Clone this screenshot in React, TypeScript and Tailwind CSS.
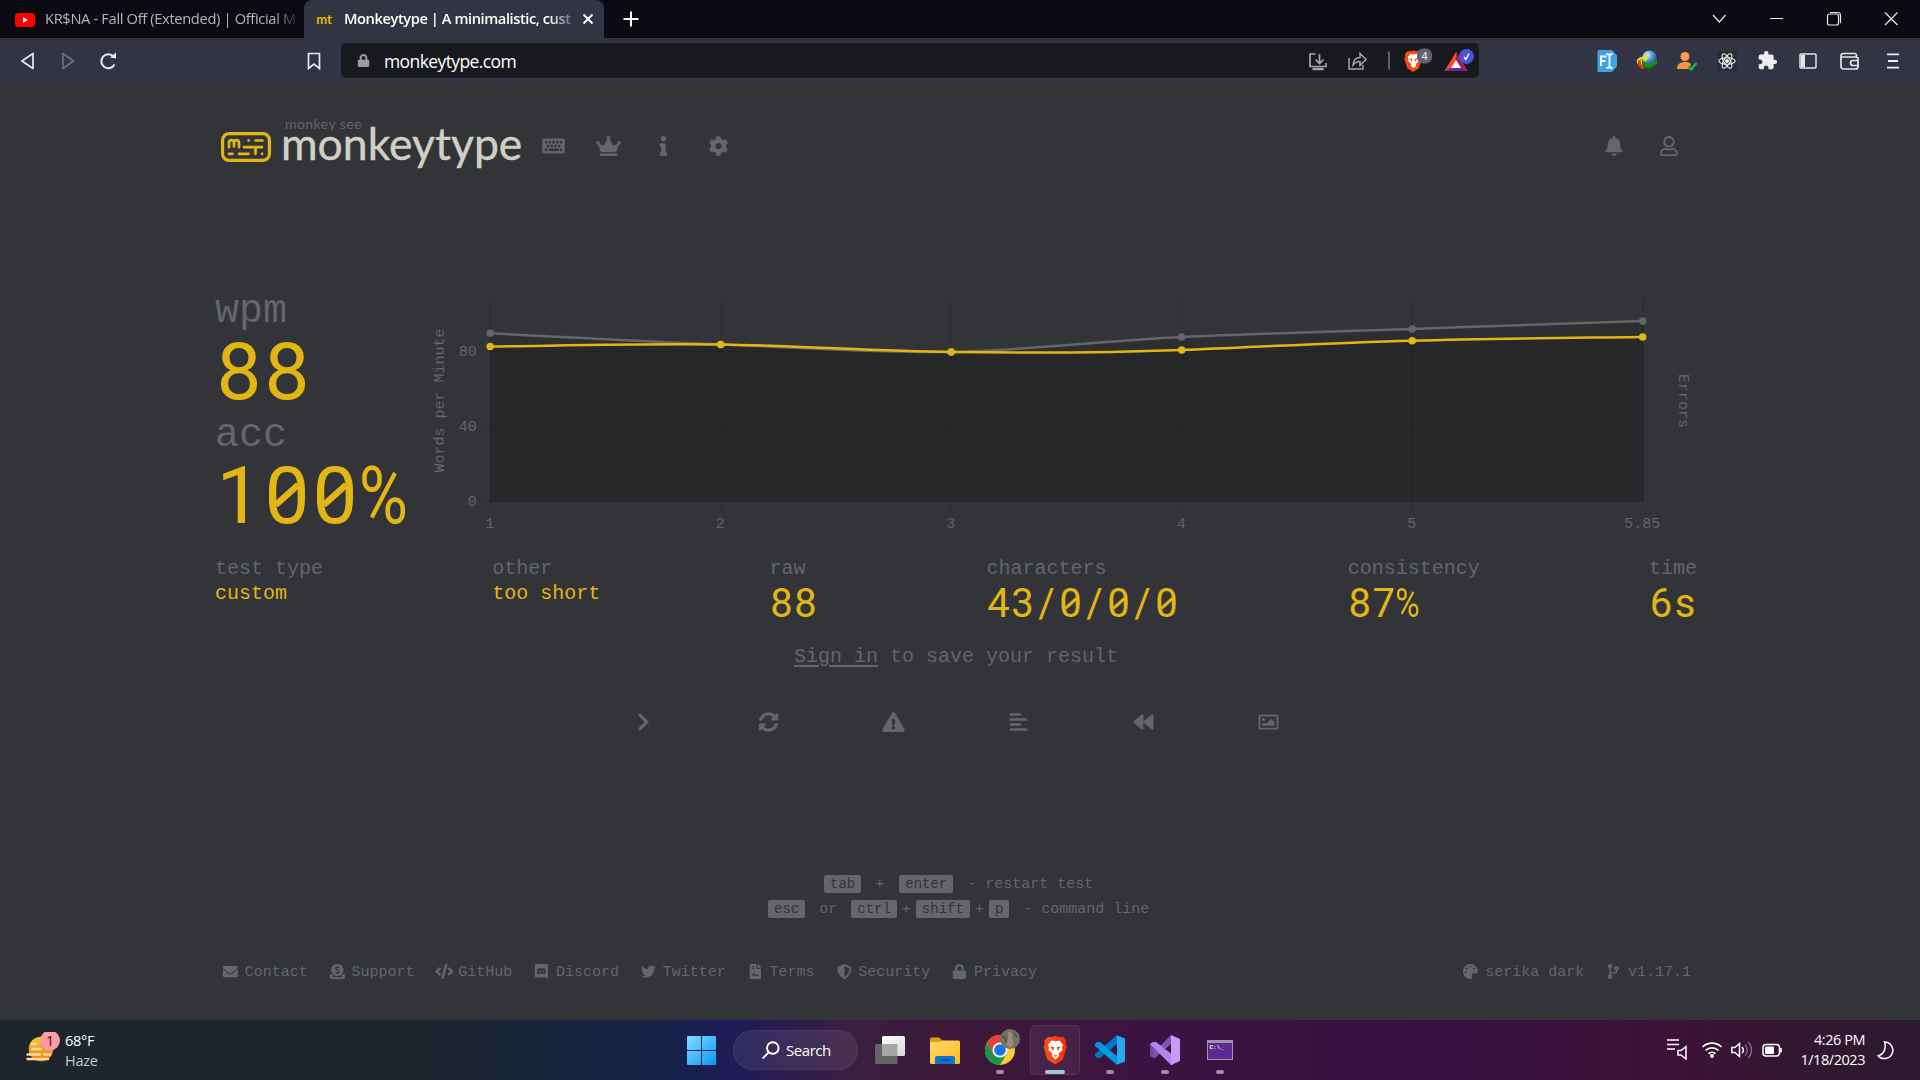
import React from "react";
import {
  FaKeyboard, FaCrown, FaInfo, FaCog, FaBell, FaRegUser, FaChevronRight, FaSyncAlt,
  FaExclamationTriangle, FaAlignLeft, FaBackward, FaRegImage, FaEnvelope, FaDonate, FaCode,
  FaTwitter, FaFileContract, FaShieldAlt, FaLock, FaPalette, FaCodeBranch,
} from "react-icons/fa";
import { MdExtension } from "react-icons/md";

const MONO = "font-['Liberation_Mono',monospace]";
const UI = "font-['Open_Sans','Noto_Sans',sans-serif]";

/* ---------- browser chrome ---------- */

function BraveLion({ className }: { className: string }) {
  return (
    <svg viewBox="0 0 26 30" className={className}>
      <path d="M5 1.500h5l3-1 3 1h5l3 4-1 2.500 1.500 4-4 13-8 5-8-5-4-13L2 8 1 5.500z" fill="#fb4a14" />
      <path d="M13 .5l3 1h5l3 4-1 2.500 1.500 4-4 13L13 30z" fill="#ff2000" opacity=".55" />
      <path d="M13 6l4-1 4 4.500-1.500 3 1 2.500-4.500 4 1 2-4 4-4-4 1-2-4.500-4 1-2.500L5 9.500 9 5z" fill="#fff" />
      <path d="M7.500 11l4 1.200-.8 3.800zM18.500 11l-4 1.200.8 3.800zM10.500 20.500h5L13 22z" fill="#fb3a10" />
    </svg>
  );
}

function TabStrip() {
  return (
    <div className="flex h-[38px] bg-[#0b0a13]">
      <div className="flex w-[304px] items-center pl-[15px]">
        <svg viewBox="0 0 20 14" className="mt-[1px] h-[14px] w-5 shrink-0">
          <rect width="20" height="14" rx="3.500" fill="#f00" />
          <path d="M8 4l5 3-5 3z" fill="#fff" />
        </svg>
        <div className="mb-[2px] ml-[10px] w-[259px] whitespace-nowrap text-[14.700px] tracking-[-0.350px] text-[#b4b4ba] [mask-image:linear-gradient(90deg,#000_88%,transparent_99%)]">
          KR$NA - Fall Off (Extended) | Official M
        </div>
      </div>
      <div className="flex w-[300px] items-center rounded-t-[8px] bg-[#323443] pl-[11px]">
        <div className="flex h-[18px] w-[18px] shrink-0 items-center justify-center rounded-[3px] bg-[#323437] font-['Lato',sans-serif] text-[13px] font-bold leading-none text-[#e2b714]">
          <span>mt</span>
        </div>
        <div className="mb-[2px] ml-[11px] w-[232px] whitespace-nowrap text-[14.700px] font-semibold tracking-[-0.440px] text-white [mask-image:linear-gradient(90deg,#000_88%,transparent_102%)]">
          Monkeytype | A minimalistic, cust
        </div>
        <svg viewBox="0 0 12 12" className="ml-[6px] h-3 w-3 shrink-0" stroke="#fff" strokeWidth="1.900">
          <path d="M1.500 1.500l9 9M10.500 1.500l-9 9" />
        </svg>
      </div>
      <div className="flex w-[54px] items-center justify-center">
        <svg viewBox="0 0 16 16" className="h-4 w-4" stroke="#fff" strokeWidth="2">
          <path d="M8 .5v15M.5 8h15" />
        </svg>
      </div>
      <div className="ml-auto flex w-[230px] items-center">
        <svg viewBox="0 0 230 38" className="h-[38px] w-[230px]" fill="none" stroke="#e8e8ea" strokeWidth="1.200">
          <path d="M23 15l6.300 7 6.300-7M80 18.500h13" />
          <path d="M137.500 16a2 2 0 0 1 2-2h7a2 2 0 0 1 2 2v7a2 2 0 0 1-2 2h-7a2 2 0 0 1-2-2zM140 12.500h7.500a3 3 0 0 1 3 3V23" />
          <path d="M195 12.500l12.500 12.500M207.500 12.500L195 25" />
        </svg>
      </div>
    </div>
  );
}

function Extensions() {
  return (
    <div className="ml-[118px] flex items-center">
      <svg viewBox="0 0 22 22" className="h-[22px] w-[22px]">
        <path d="M2 0h13l5 5.500v11L15 22H2a1.500 1.500 0 0 1-1.500-1.500v-19A1.500 1.500 0 0 1 2 0z" fill="#3ea2e5" />
        <path d="M4 16V6.500h5.500M4 11h4.500M9.500 4c2 0 3 1 3 2v10c0 1-1 2-3 2M15.500 4c-2 0-3 1-3 2v10c0 1 1 2 3 2" stroke="#fff" strokeWidth="1.800" fill="none" />
      </svg>
      <svg viewBox="0 0 22 22" className="ml-[17px] h-[22px] w-[22px]">
        <defs>
          <radialGradient id="globe" cx=".35" cy=".3" r=".8">
            <stop offset="0" stopColor="#e9f4ff" />
            <stop offset=".4" stopColor="#5aa0dc" />
            <stop offset="1" stopColor="#0d3a7a" />
          </radialGradient>
        </defs>
        <circle cx="13.500" cy="8" r="7.500" fill="url(#globe)" />
        <path d="M10 4c2 0 3 2 2 4s-2 2-2 4l-3-2c0-3 1-5 3-6z" fill="#d9e04a" />
        <path d="M9 6C3 7 0 9 1 13c1 3 4 5 7 5-3-3-3-8 1-12z" fill="#e9dc28" />
        <path d="M2 11c-1 4 1 7 5 8l2-1c-4-2-5-5-4-9z" fill="#e8301d" />
        <path d="M6 9c-1 5 2 9 7 9l-1 3 9-7V9l-3 3c-4 3-9 2-12-3z" fill="#18921c" />
        <path d="M13 18l-1 3 9-8z" fill="#0a5a14" />
      </svg>
      <svg viewBox="0 0 22 22" className="ml-[18px] h-[22px] w-[22px]">
        <circle cx="9" cy="6.500" r="4.500" fill="#ff9b42" />
        <path d="M1 19c0-5 3-7 8-7 4 0 5.500 1 6 2.500L13 19z" fill="#f9953d" />
        <path d="M12 16.500l3 3L20.500 13" stroke="#1fb85e" strokeWidth="2.400" fill="none" />
      </svg>
      <svg viewBox="0 0 22 22" className="ml-[19px] h-[20px] w-[20px] bg-[#292b36]" fill="none" stroke="#f2f2f2" strokeWidth="1.200">
        <ellipse cx="11" cy="11" rx="9" ry="3.500" />
        <ellipse cx="11" cy="11" rx="9" ry="3.500" transform="rotate(60 11 11)" />
        <ellipse cx="11" cy="11" rx="9" ry="3.500" transform="rotate(120 11 11)" />
        <circle cx="11" cy="11" r="1.500" fill="#f2f2f2" />
      </svg>
      <MdExtension className="ml-[20px] h-[21px] w-[21px] text-[#ececf0]" />
      <svg viewBox="0 0 18 16" className="ml-[21px] h-[16px] w-[18px]" fill="none" stroke="#e6e6ea" strokeWidth="1.500">
        <rect x="1" y="1" width="16" height="14" rx="1" />
        <path d="M2 2h4v12H2z" fill="#e6e6ea" stroke="none" />
      </svg>
      <svg viewBox="0 0 20 18" className="ml-[23px] h-[18px] w-5" fill="none" stroke="#e6e6ea" strokeWidth="1.700">
        <path d="M16.500 5V3.500a2 2 0 0 0-2-2H3a2 2 0 0 0-2 2v11a2.500 2.500 0 0 0 2.500 2.500h12a2.500 2.500 0 0 0 2.500-2.500V7a2 2 0 0 0-2-2H2M19 8.500h-6a2.500 2.500 0 0 0 0 5h6" />
      </svg>
      <svg viewBox="0 0 12 16" className="ml-[27px] h-4 w-3" stroke="#f0f0f4" strokeWidth="1.800">
        <path d="M0 1.300h12M1 8h10M0 14.700h12" />
      </svg>
    </div>
  );
}

function Toolbar() {
  return (
    <div className="flex h-[46px] items-center bg-[#323443] pb-[1px]">
      <svg viewBox="0 0 110 24" className="ml-[16px] h-6 w-[110px]" fill="none">
        <path d="M6 12L17 4.500v15z" stroke="#e8e8ec" strokeWidth="1.700" strokeLinejoin="round" />
        <path d="M57.500 12L47 4.500v15z" stroke="#6d6f7c" strokeWidth="1.700" strokeLinejoin="round" />
        <path d="M97.500 7.500a7 7 0 1 0 1 8" stroke="#e8e8ec" strokeWidth="2" />
        <path d="M94 8.500l6 1V3.500z" fill="#e8e8ec" />
      </svg>
      <svg viewBox="0 0 14 18" className="ml-[181px] h-[18px] w-[14px]" fill="none" stroke="#e8e8ec" strokeWidth="1.700">
        <path d="M1.500 1.500h11v15L7 12l-5.500 4.500z" />
      </svg>
      <div className="ml-[20px] flex h-[35px] w-[1138px] items-center rounded-[5px] bg-[#17191f]">
        <FaLock className="ml-[16px] h-[13px] w-[13px] text-[#9b9ca3]" />
        <div className="ml-[14px] text-[17.500px] leading-[24px] tracking-[-0.600px] text-white">monkeytype.com</div>
        <svg viewBox="0 0 180 35" className="ml-auto h-[35px] w-[180px]" fill="none" stroke="#a5a6ab" strokeWidth="1.700">
          <path d="M16.500 11H11v12.500h16V20M20.500 11v9M16.500 16.500l4 4 4-4" />
          <path d="M13.500 26h11" strokeWidth="2.500" />
          <path d="M50 15v11h14v-4M54 22c.5-5 3-7.500 7-7.500v-4l6 6-6 6v-4c-3 0-5 1-7 3.500z" strokeWidth="1.500" />
          <path d="M90 8.500v18" stroke="#7d7e86" strokeWidth="1.400" />
          <g stroke="none">
            <path d="M157 9L168.500 28h-23z" fill="#ff4724" />
            <path d="M157 9L168.500 28l-11.500-7z" fill="#9e1f63" />
            <path d="M145.500 28l11.500-6.500L168.500 28z" fill="#662d91" />
            <path d="M157 17l5 8h-10z" fill="#fff" />
            <circle cx="167.500" cy="13.500" r="7.500" fill="#4c54d2" />
          </g>
          <path d="M165 14l1.800 2.500 3.200-6" stroke="#fff" strokeWidth="1.300" />
          <svg x="105" y="7" width="19" height="22" viewBox="0 0 26 30">
            <path d="M5 1.500h5l3-1 3 1h5l3 4-1 2.500 1.500 4-4 13-8 5-8-5-4-13L2 8 1 5.500z" fill="#fb4a14" stroke="none" />
            <path d="M13 6l4-1 4 4.500-1.500 3 1 2.500-4.500 4 1 2-4 4-4-4 1-2-4.500-4 1-2.500L5 9.500 9 5z" fill="#fff" stroke="none" />
            <path d="M7.500 11l4 1.200-.8 3.800zM18.500 11l-4 1.200.8 3.800z" fill="#fb3a10" stroke="none" />
          </svg>
          <rect x="118" y="5.500" width="15" height="15" rx="6" fill="#5f626e" stroke="none" />
          <text x="125.500" y="16.700" textAnchor="middle" fill="#fff" stroke="none" fontSize="10.500" fontFamily="Open Sans">4</text>
        </svg>
      </div>
      <Extensions />
    </div>
  );
}

/* ---------- monkeytype page ---------- */

function Logo() {
  return (
    <div className="flex">
      <svg viewBox="0 0 50 30" className="mt-[48px] h-[30px] w-[50px]" fill="none" stroke="#e2b714" strokeLinecap="round">
        <rect x="1.600" y="1.600" width="46.800" height="26.800" rx="6.500" strokeWidth="3.200" />
        <g strokeWidth="2.700">
          <path d="M8 15.200V11a2.500 2.800 0 0 1 5 0v3.500M13 11a2.500 2.800 0 0 1 5 0v4.200" />
          <path d="M27.500 8.500h.3M34.500 8.500h7M23 15.200h18M34.500 15.200v6.600M8 21.800h3.500M18 21.800h9.500M41 21.800h.2" />
        </g>
      </svg>
      <div className="ml-[10px] flex w-[244px] flex-col font-['Lato',sans-serif]">
        <span className="mt-[33px] pl-[4px] text-[14px] leading-[14px] tracking-[0.450px] text-[#646669]">monkey see</span>
        <span className="-mt-[10px] text-[44.500px] leading-[44px] tracking-[0.020px] text-[#d1d0c5] [-webkit-text-stroke:0.400px_#d1d0c5]">monkeytype</span>
      </div>
    </div>
  );
}

function Header() {
  return (
    <header className="flex h-[98px] pl-[221px] pr-[241px]">
      <Logo />
      <nav className="ml-[1px] mt-[16px] flex h-[92px] items-center text-[#646669]">
        {[FaKeyboard, FaCrown, FaInfo, FaCog].map((Icon, i) => (
          <div key={i} className="flex w-[55px] justify-center"><Icon className="h-5 w-[25px] shrink-0" /></div>
        ))}
      </nav>
      <nav className="ml-auto mt-[16px] flex h-[92px] items-center gap-[35px] text-[#646669]">
        <FaBell className="h-5 w-5" />
        <FaRegUser className="h-5 w-5" />
      </nav>
    </header>
  );
}

/* Digits sit in fixed cells, and zeros carry a slash. */
function Digits({ value }: { value: string }) {
  return (
    <span className="flex font-['Roboto',sans-serif]">
      {value.split("").map((c, i) => (
        <span key={i} className="relative flex w-[0.6em] justify-center">
          {c === "%" ? <span className="-mx-[0.1em] inline-block scale-x-[0.84]">%</span> : c}
          {c === "0" && (
            <svg viewBox="0 0 60 100" className="absolute inset-0 h-full w-full" stroke="currentColor" strokeWidth="8">
              <path d="M16 61L44 36" />
            </svg>
          )}
        </span>
      ))}
    </span>
  );
}

const xs = [45.500, 276, 506.500, 737, 967.500, 1198];
const ticks = ["1", "2", "3", "4", "5", "5.85"];
const rawYs = [34.300, 45.500, 53, 38, 30, 22];
const wpmYs = [47.500, 45.500, 53, 51, 41.700, 38];
const RAW = "M45.500 34.300C122 38 198 43 276 45.500C352 48 429 54 506.500 53C583 51 659 42 737 38C813 34.500 890 32.500 967.500 30C1044 27 1120 24 1198 22";
const WPM = "M45.500 47.500C122 46.500 198 44.500 276 45.500C352 46.500 429 52 506.500 53C583 54 659 54 737 51C813 48 890 43.500 967.500 41.700C1044 39.500 1120 39 1198 38";

function Chart() {
  return (
    <svg viewBox="0.3 0 1260 240" className="mt-[8px] h-[240px] w-[1260px] overflow-visible" fontFamily="Liberation Mono" fontSize="15">
      <path d={RAW + "V202.500H45.500z"} fill="#030200" fillOpacity=".11" />
      <path d={WPM + "V202.500H45.500z"} fill="#030200" fillOpacity=".11" />
      <g stroke="#000" strokeOpacity=".1">
        {[52.500, 127.500, 202.500].map((y) => <path key={y} d={`M36 ${y}H1198`} />)}
        {xs.map((x) => <path key={x} d={`M${Math.floor(x) + 0.5} 0V213`} />)}
        <path d="M45.500 0V202.500M1198.500 0V202.500M45 202.500H1198" />
      </g>
      <path d={RAW} fill="none" stroke="#646669" strokeWidth="2.500" />
      {xs.map((x, i) => <circle key={x} cx={x} cy={rawYs[i]} r="3.800" fill="#646669" />)}
      <path d={WPM} fill="none" stroke="#e2b714" strokeWidth="2.500" />
      {xs.map((x, i) => <circle key={x} cx={x} cy={wpmYs[i]} r="3.800" fill="#e2b714" />)}
      <g fill="#646669">
        <text x="32" y="56.500" textAnchor="end">80</text>
        <text x="32" y="131.500" textAnchor="end">40</text>
        <text x="32" y="206.500" textAnchor="end">0</text>
        {xs.map((x, i) => <text key={x} x={x - 0.5} y="229" textAnchor="middle">{ticks[i]}</text>)}
        <text transform="translate(-1 101.500) rotate(-90)" textAnchor="middle">Words per Minute</text>
        <text transform="translate(1234 102) rotate(90)" textAnchor="middle">Errors</text>
      </g>
    </svg>
  );
}

function Stat({ label, value, big }: { label: string; value: string; big?: boolean }) {
  return (
    <div className="flex flex-col text-[20px] leading-[25px]">
      <span className="text-[#646669]">{label}</span>
      {big ? (
        <div className="mt-[3px] text-[40px] leading-[40px] text-[#e2b714]"><Digits value={value} /></div>
      ) : (
        <span className="text-[#e2b714]">{value}</span>
      )}
    </div>
  );
}

function Result() {
  return (
    <section className="pl-[215px] pr-[223px]">
      <div className="mt-[109px] flex h-[265px]">
        <div className="flex w-[230px] shrink-0 flex-col">
          <div className="mt-[1px] text-[40px] leading-[40px] text-[#646669]">wpm</div>
          <div className="text-[80px] leading-[80px] text-[#e2b714]"><Digits value="88" /></div>
          <div className="mt-[4px] text-[40px] leading-[40px] text-[#646669]">acc</div>
          <div className="text-[80px] leading-[80px] text-[#e2b714]"><Digits value="100%" /></div>
        </div>
        <div className="shrink-0"><Chart /></div>
      </div>
      <div className="flex h-[88px] justify-between">
        <Stat label="test type" value="custom" />
        <Stat label="other" value="too short" />
        <Stat label="raw" value="88" big />
        <Stat label="characters" value="43/0/0/0" big />
        <Stat label="consistency" value="87%" big />
        <Stat label="time" value="6s" big />
      </div>
      <div className="text-center text-[20px] leading-[25px] text-[#646669]">
        <span className="underline decoration-2 underline-offset-[3px]">Sign in</span> to save your result
      </div>
      <div className="mt-[43px] flex h-5 justify-center pr-[1px] text-[#646669]">
        {[FaChevronRight, FaSyncAlt, FaExclamationTriangle, FaAlignLeft, FaBackward, FaRegImage].map((Icon, i) => (
          <div key={i} className="flex w-[125px] items-center justify-center"><Icon className="h-5 w-[25px]" /></div>
        ))}
      </div>
    </section>
  );
}

function Key({ children }: { children: string }) {
  return <kbd className={`${MONO} h-[18px] rounded-[2px] bg-[#646669] px-[6px] text-[14px] leading-[19px] text-[#323437]`}>{children}</kbd>;
}

function Tips() {
  return (
    <div className="mt-[143px] flex flex-col gap-[7px] text-[15px] leading-[20px] text-[#646669]">
      <div className="flex h-[18px] pl-[824px]">
        <Key>tab</Key>
        <span className="ml-[14px] mr-[15px]">+</span>
        <Key>enter</Key>
        <span className="ml-[14px]">- restart test</span>
      </div>
      <div className="flex h-[18px] pl-[768px]">
        <Key>esc</Key>
        <span className="ml-[14px] mr-[14px]">or</span>
        <Key>ctrl</Key>
        <span className="mx-[5px]">+</span>
        <Key>shift</Key>
        <span className="mx-[5px]">+</span>
        <Key>p</Key>
        <span className="ml-[14px]">- command line</span>
      </div>
    </div>
  );
}

type Glyph = React.ComponentType<{ className?: string }>;

function DiscordBubble({ className }: { className?: string }) {
  return (
    <svg viewBox="0 0 448 512" className={className} fill="currentColor">
      <path fillRule="evenodd" d="M52 0h344c29 0 52 23 52 53v459l-54-48-32-28 14 26H52c-29 0-52-23-52-53V53C0 23 23 0 52 0zm118 136c-42 6-68 28-68 28s-24 50-28 142c14 24 44 44 82 44l18-22c-20-6-36-18-36-18 54 26 118 26 172 0 0 0-16 12-38 18l20 22c38 0 68-20 82-44-4-92-28-142-28-142s-26-22-70-28l-8 14c-26-4-54-4-84 0zm6 88c14 0 26 12 26 28s-12 28-26 28-26-12-26-28 12-28 26-28zm96 0c14 0 26 12 26 28s-12 28-26 28-26-12-26-28 12-28 26-28z" />
    </svg>
  );
}

function FooterItem({ icon: Icon, label }: { icon: Glyph; label: string }) {
  return (
    <div className="flex items-center">
      <Icon className="h-[15px] w-[18.750px] shrink-0" />
      <span className="ml-[5px] mt-[4px]">{label}</span>
    </div>
  );
}

function Footer() {
  const links: [Glyph, string][] = [
    [FaEnvelope, "Contact"], [FaDonate, "Support"], [FaCode, "GitHub"], [DiscordBubble, "Discord"],
    [FaTwitter, "Twitter"], [FaFileContract, "Terms"], [FaShieldAlt, "Security"], [FaLock, "Privacy"],
  ];
  return (
    <footer className="mt-[43px] flex h-[20px] items-center pl-[221px] pr-[229px] text-[15px] leading-[20px] text-[#646669]">
      <div className="flex gap-5">
        {links.map(([icon, t]) => <FooterItem key={t} icon={icon} label={t} />)}
      </div>
      <div className="ml-auto flex gap-5">
        <FooterItem icon={FaPalette} label="serika dark" />
        <FooterItem icon={FaCodeBranch} label="v1.17.1" />
      </div>
    </footer>
  );
}

/* ---------- taskbar ---------- */

function Dot() {
  return <div className="absolute bottom-[6px] left-1/2 h-[4px] w-[8px] -translate-x-1/2 rounded-full bg-[#a08da8]" />;
}

function Taskbar() {
  return (
    <div className={`${UI} flex h-[60px] items-center bg-[linear-gradient(90deg,#1c262c_0%,#1b252d_22%,#17224a_35%,#1f1b57_38.500%,#3a1f42_44%,#3c1a38_49%,#3b1342_60%,#380f40_75%,#3d1138_87%,#33162f_93%,#2b1a30_100%)] text-white`}>
      <div className="flex w-[687px] items-center pl-[26px]">
        <svg viewBox="0 0 36 36" className="h-9 w-9">
          <defs>
            <linearGradient id="sun" x1="0" y1="0" x2="0" y2="1">
              <stop offset="0" stopColor="#ffc832" /><stop offset="1" stopColor="#f07a10" />
            </linearGradient>
          </defs>
          <circle cx="15" cy="17" r="12.300" fill="url(#sun)" />
          <path d="M6 12h4M6 17H14M1.500 22.500H14M18 22.500h6M1.500 27H22" stroke="#f7dfa2" strokeWidth="2.400" strokeLinecap="round" />
          <circle cx="24" cy="8.500" r="10" fill="#ff99a4" />
          <text x="24" y="13.500" textAnchor="middle" fontSize="14" fill="#1a1a1a" fontFamily="Open Sans">1</text>
        </svg>
        <div className="ml-[3px] mt-[1px] flex flex-col text-[14.500px] leading-5 tracking-[-0.300px]">
          <span>68°F</span>
          <span className="text-[#c3c8cc]">Haze</span>
        </div>
      </div>
      <svg viewBox="0 0 29 29" className="h-[29px] w-[29px]">
        <defs>
          <linearGradient id="win" x1="0" y1="0" x2="1" y2="1">
            <stop offset="0" stopColor="#7fe0ff" /><stop offset="1" stopColor="#0a94f5" />
          </linearGradient>
        </defs>
        <path d="M0 1a1 1 0 0 1 1-1h13v14H0zM15 0h13a1 1 0 0 1 1 1v13H15zM0 15h14v14H1a1 1 0 0 1-1-1zM15 15h14v13a1 1 0 0 1-1 1H15z" fill="url(#win)" />
      </svg>
      <div className="ml-[17px] flex h-10 w-[125px] items-center rounded-full border border-white/5 bg-white/8 pl-[28px]">
        <svg viewBox="0 0 18 18" className="h-[18px] w-[18px]" fill="none" stroke="#fff" strokeWidth="1.900" strokeLinecap="round">
          <circle cx="10.800" cy="7" r="5.800" /><path d="M6.500 11.500L1.200 16.800" />
        </svg>
        <span className="ml-[6px] text-[15px] tracking-[-0.450px]">Search</span>
      </div>
      <svg viewBox="0 0 30 28" className="ml-[17px] h-7 w-[30px]">
        <defs><linearGradient id="tv" x1="0" y1="0" x2="1" y2="1"><stop offset="0" stopColor="#fff" /><stop offset="1" stopColor="#d8d8d8" /></linearGradient></defs>
        <rect y="8" width="22.500" height="20" rx="1.500" fill="#646464" />
        <rect x="7" width="23" height="20" rx="1.500" fill="url(#tv)" />
        <path d="M7 8h15.500v12H8.500A1.500 1.500 0 0 1 7 18.500z" fill="#a6a6a6" />
      </svg>
      <svg viewBox="0 0 30 27" className="ml-[25px] h-[27px] w-[30px]">
        <defs><linearGradient id="fold" x1="0" y1="0" x2="1" y2="1"><stop offset="0" stopColor="#ffdb6b" /><stop offset="1" stopColor="#fdbb1d" /></linearGradient></defs>
        <path d="M0 2a1.500 1.500 0 0 1 1.500-1.500H9L13 4v5H0z" fill="#e2a008" />
        <path d="M0 5h10l3-1.500h15.500A1.500 1.500 0 0 1 30 5v20.500a1.500 1.500 0 0 1-1.500 1.500h-27A1.500 1.500 0 0 1 0 25.500z" fill="url(#fold)" />
        <path d="M5 21a2 2 0 0 1 2-2h16a2 2 0 0 1 2 2v6H5z" fill="#0f76cf" />
        <path d="M9 23h12" stroke="#0a4c92" strokeWidth="1.500" />
      </svg>
      <div className="relative ml-[15px] flex h-[60px] w-[50px] items-center justify-center">
        <svg viewBox="0 0 48 48" className="h-[30px] w-[30px]">
          <circle cx="24" cy="24" r="24" fill="#fcc934" />
          <path d="M3.200 12A24 24 0 0 0 24 48L34.400 30 24 35 13.600 30z" fill="#1e9447" />
          <path d="M3.200 12A24 24 0 0 1 44.800 12H24L13.600 30z" fill="#ea4335" />
          <circle cx="24" cy="24" r="12" fill="#fff" /><circle cx="24" cy="24" r="9.300" fill="#1a73e8" />
        </svg>
        <svg viewBox="0 0 20 20" className="absolute left-[25px] top-[9px] h-5 w-5">
          <circle cx="10" cy="10" r="10" fill="#6f7560" />
          <path d="M8 3c3-1 5 1 4 4l2 8-4 4-4-3 2-6z" fill="#a4877c" />
          <path d="M2 8c3-1 4 2 4 6M14 4l3 4" stroke="#4d5a42" strokeWidth="2" fill="none" />
        </svg>
        <Dot />
      </div>
      <div className="relative ml-[5px] flex h-[50px] w-[50px] items-center justify-center rounded-[5px] border border-white/8 bg-white/6">
        <BraveLion className="h-[30px] w-[25px]" />
        <div className="absolute bottom-0 left-1/2 h-[4px] w-5 -translate-x-1/2 rounded-full bg-[#a3c5dc]" />
      </div>
      <div className="relative ml-[5px] flex h-[60px] w-[50px] items-center justify-center">
        <svg viewBox="0 0 30 30" className="h-[30px] w-[30px]">
          <path d="M22 0L0 19v2l2 2 3 0L22 9z" fill="#0079c4" />
          <path d="M22 30L0 11V9l2-2h3l17 14z" fill="#0099e0" />
          <path d="M21 0l9 3.500v23L21 30l1-1V1z" fill="#29a9f2" />
        </svg>
        <Dot />
      </div>
      <div className="relative ml-[5px] flex h-[60px] w-[50px] items-center justify-center">
        <svg viewBox="0 0 30 30" className="h-[30px] w-[30px]">
          <path d="M0 9l3-2 6 8-6 8-3-2z" fill="#6c4ba6" />
          <path d="M3 7L9 12 21 0v9L5 23l-5-2 4-1z" fill="#7a55b5" />
          <path d="M3 7h3l17 13v10h-2L0 9z" fill="#b088ec" />
          <path d="M21 0l9 4v22l-9 4z" fill="#c79bf7" />
        </svg>
        <Dot />
      </div>
      <div className="relative ml-[5px] flex h-[60px] w-[50px] items-center justify-center">
        <svg viewBox="0 0 26 20" className="h-5 w-[26px]">
          <rect x=".5" y=".5" width="25" height="19" fill="#5b2a91" stroke="#9d9aa5" />
          <path d="M1 2h24" stroke="#b9b6c0" strokeWidth="1.500" />
          <text x="2.500" y="9" fontSize="6" fontWeight="700" fill="#fff" fontFamily="Liberation Mono">C:\_</text>
        </svg>
        <Dot />
      </div>
      <svg viewBox="0 0 120 30" className="ml-auto h-[30px] w-[120px]" fill="none" stroke="#fff" strokeWidth="1.500">
        <path d="M0 5h12M0 9.500h12M0 14h8M11 15.500h3l5-4v12.500l-5-4h-3z" />
        <g strokeWidth="1.700"><path d="M35.500 12a13.500 13.500 0 0 1 19 0M38.500 15.500a9.500 9.500 0 0 1 13 0M41.500 18.800a5 5 0 0 1 7 0" /></g>
        <circle cx="45" cy="21" r="2" fill="#fff" stroke="none" />
        <path d="M64.800 12.500h3L72.500 8.500v13l-4.700-4h-3z" /><path d="M75 12a4 4 0 0 1 0 6" />
        <path d="M78 9.500a8 8 0 0 1 0 11M81 7a11 11 0 0 1 0 16" stroke="#84668a" />
        <rect x="96" y="9.500" width="16.500" height="11.500" rx="3" /><rect x="98" y="11.500" width="9" height="7.500" rx="1" fill="#fff" stroke="none" />
        <path d="M113.500 13v4.500" strokeWidth="2.500" />
      </svg>
      <div className="flex w-[78px] flex-col text-right text-[14.500px] leading-5 tracking-[-0.450px]">
        <span>4:26 PM</span>
        <span>1/18/2023</span>
      </div>
      <svg viewBox="0 0 18 19" className="ml-[12px] mr-[25px] h-[19px] w-[18px]" fill="none" stroke="#fff" strokeWidth="1.500">
        <path d="M7.500 1a8.300 8.300 0 1 1-6.300 13.700C7 13.500 9.500 7 7.500 1z" />
      </svg>
    </div>
  );
}

export default function App() {
  return (
    <div className="flex h-[1080px] w-[1920px] flex-col overflow-hidden bg-[#323437]">
      <div className={UI}>
        <TabStrip />
        <Toolbar />
      </div>
      <main className={`${MONO} h-[936px]`}>
        <Header />
        <Result />
        <Tips />
        <Footer />
      </main>
      <Taskbar />
    </div>
  );
}
